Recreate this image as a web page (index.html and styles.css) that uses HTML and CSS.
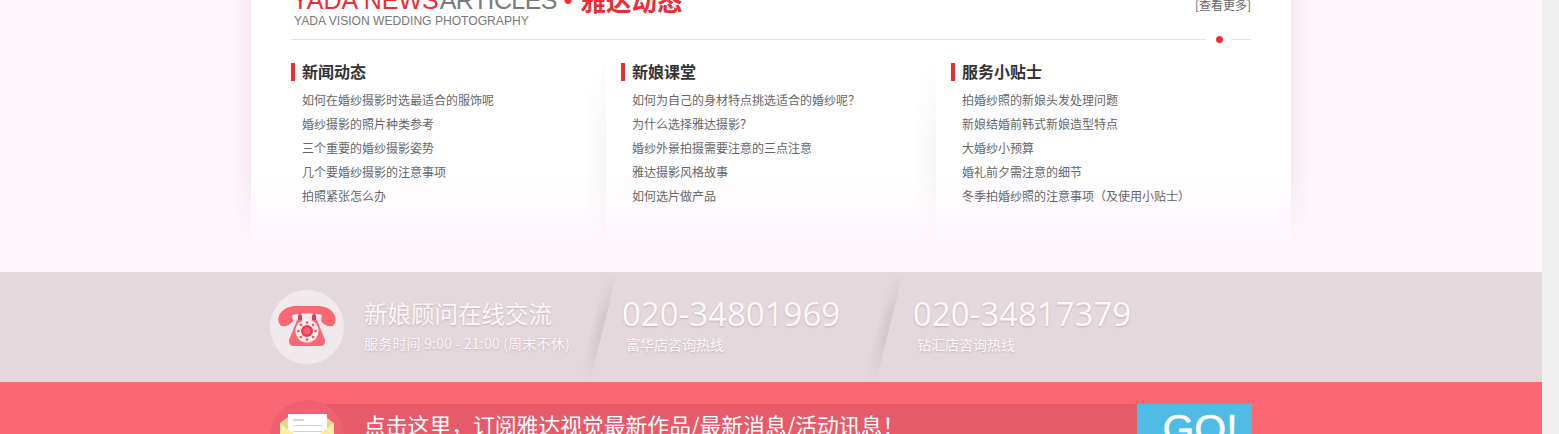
FILE: index.html
```html
<!DOCTYPE html>
<html lang="zh-CN">
<head>
<meta charset="utf-8">
<title>雅达动态</title>
<link rel="stylesheet" href="styles.css">
</head>
<body>
<div class="page">
  <section class="news">
    <div class="panel">
      <span class="shade shade-left"></span>
      <span class="shade shade-right"></span>
      <header class="head">
        <div class="head-text">
          <h2 class="head-title"><span class="en-red">YADA NEWS</span><span class="en-grey">ARTICLES</span><span class="head-dot">•</span><span class="cn-red">雅达动态</span></h2>
          <p class="head-sub">YADA VISION WEDDING PHOTOGRAPHY</p>
        </div>
        <a class="more">[查看更多]</a>
      </header>
      <div class="rule"><span class="rule-line"></span><span class="rule-dot"></span><span class="rule-end"></span></div>
      <div class="cols">
        <div class="col col-first">
          <h3 class="col-title">新闻动态</h3>
          <ul class="list">
            <li>如何在婚纱摄影时选最适合的服饰呢</li>
            <li>婚纱摄影的照片种类参考</li>
            <li>三个重要的婚纱摄影姿势</li>
            <li>几个要婚纱摄影的注意事项</li>
            <li>拍照紧张怎么办</li>
          </ul>
        </div>
        <div class="col col-mid">
          <h3 class="col-title">新娘课堂</h3>
          <ul class="list">
            <li>如何为自己的身材特点挑选适合的婚纱呢？</li>
            <li>为什么选择雅达摄影？</li>
            <li>婚纱外景拍摄需要注意的三点注意</li>
            <li>雅达摄影风格故事</li>
            <li>如何选片做产品</li>
          </ul>
        </div>
        <div class="col col-last">
          <h3 class="col-title">服务小贴士</h3>
          <ul class="list">
            <li>拍婚纱照的新娘头发处理问题</li>
            <li>新娘结婚前韩式新娘造型特点</li>
            <li>大婚纱小预算</li>
            <li>婚礼前夕需注意的细节</li>
            <li>冬季拍婚纱照的注意事项（及使用小贴士）</li>
          </ul>
        </div>
      </div>
    </div>
  </section>

  <section class="contact">
    <div class="contact-in">
      <div class="badge badge-light">
        <svg class="badge-svg" viewBox="0 0 74 74" width="74" height="74" aria-hidden="true">
          <path fill="#fb6874" d="M9 33C6 25 14 16 26 16H48C60 16 68 25 65 33L63 36C58 37 54 35 51 31L52 25C44 23 30 23 22 25L23 31C20 35 16 37 11 36Z"/>
          <rect x="28" y="24" width="4" height="8" rx="2" fill="#d9404f"/>
          <rect x="42" y="24" width="4" height="8" rx="2" fill="#d9404f"/>
          <path fill="#fb6874" d="M27 30H47L55 50Q55.500 56 50 56H24Q18.500 56 19 50Z"/>
          <circle cx="37" cy="41" r="11.500" fill="#f8eef0"/>
          <circle cx="37" cy="41" r="6" fill="#e8404f"/>
          <circle cx="37" cy="41" r="3.500" fill="#f9626f"/>
          <g fill="#f2545f">
            <circle cx="37" cy="32.500" r="1.300"/><circle cx="43" cy="35" r="1.300"/><circle cx="45.500" cy="41" r="1.300"/><circle cx="43" cy="47" r="1.300"/><circle cx="37" cy="49.500" r="1.300"/><circle cx="31" cy="47" r="1.300"/><circle cx="28.500" cy="41" r="1.300"/><circle cx="31" cy="35" r="1.300"/>
          </g>
        </svg>
      </div>
      <div class="advisor">
        <p class="advisor-title">新娘顾问在线交流</p>
        <p class="advisor-sub">服务时间 9:00 - 21:00 (周末不休)</p>
      </div>
      <span class="slash slash-one"></span>
      <div class="hotline hotline-one">
        <p class="tel">020-34801969</p>
        <p class="tel-sub">富华店咨询热线</p>
      </div>
      <span class="slash slash-two"></span>
      <div class="hotline">
        <p class="tel">020-34817379</p>
        <p class="tel-sub">钻汇店咨询热线</p>
      </div>
    </div>
  </section>

  <section class="subscribe">
    <div class="sub-in">
      <div class="badge badge-red">
        <svg class="badge-svg" viewBox="0 0 74 74" width="74" height="74" aria-hidden="true">
          <path fill="#e8d787" d="M10 23L18 17H56L64 23V50H10Z"/>
          <rect x="18" y="14" width="39" height="36" fill="#fff"/>
          <rect x="23" y="19" width="11" height="2" fill="#d4d4d4"/>
          <rect x="23" y="25" width="29" height="1" fill="#d4d4d4"/>
          <rect x="23" y="31" width="29" height="1" fill="#d4d4d4"/>
          <path fill="#fbeea5" d="M10 23L37 44L64 23V50H10Z"/>
        </svg>
      </div>
      <div class="sub-bar">
        <p class="sub-text">点击这里，订阅雅达视觉最新作品/最新消息/活动讯息！</p>
        <a class="go">GO!</a>
      </div>
    </div>
  </section>
</div>
<div class="track"></div>
</body>
</html>
```
FILE: styles.css
```css
* { box-sizing: border-box; }
html, body { margin: 0; padding: 0; height: 434px; overflow: hidden; }
body {
  display: flex;
  font-family: "Noto Sans CJK SC", "Liberation Sans", sans-serif;
  background: #f0f0f0;
}
p, h2, h3, ul { margin: 0; padding: 0; }
.page { width: 1542px; flex: none; display: flex; flex-direction: column; }
.track { flex: 1; background: #f0f0f0; }

.news { height: 272px; background: #fef6fc; flex: none; }
.panel {
  position: relative;
  width: 1040px;
  height: 240px;
  margin: 0 auto;
  padding: 0 40px;
  background: linear-gradient(180deg, #fff 0, #fff 170px, #fef6fc 240px);
}
.shade {
  position: absolute;
  top: 0;
  height: 245px;
  width: 20px;
  -webkit-mask-image: linear-gradient(180deg, #000 0, #000 170px, transparent 100%);
  mask-image: linear-gradient(180deg, #000 0, #000 170px, transparent 100%);
}
.shade-left { left: -20px; background: linear-gradient(270deg, rgba(130, 80, 120, .07), rgba(130, 80, 120, 0)); }
.shade-right { right: -20px; background: linear-gradient(90deg, rgba(130, 80, 120, .07), rgba(130, 80, 120, 0)); }

.head { display: flex; justify-content: space-between; align-items: flex-start; height: 39px; }
.head-text { padding-left: 1px; }
.head-title {
  margin-top: -14px;
  height: 28px;
  line-height: 28px;
  white-space: nowrap;
  font-family: "Liberation Sans", sans-serif;
  font-size: 25px;
  font-weight: 400;
  display: flex;
  align-items: center;
}
.en-red { color: #ee2c34; }
.en-grey { color: #7a7a7a; margin-left: 1px; letter-spacing: -.6px; }
.head-dot { color: #ee2c34; margin: 0 8px 0 7px; font-weight: 700; }
.cn-red {
  color: #ee2c34;
  font-family: "Noto Sans CJK SC", sans-serif;
  font-size: 25.500px;
  font-weight: 700;
}
.head-sub {
  padding-left: 2px;
  font-family: "Liberation Sans", sans-serif;
  font-size: 12.100px;
  line-height: 14px;
  color: #777;
  white-space: nowrap;
}
.more {
  margin-top: -3px;
  font-size: 12px;
  line-height: 16px;
  color: #666;
  white-space: nowrap;
}

.rule { display: flex; align-items: center; height: 1px; }
.rule-line { flex: 1; height: 1px; background: #e5e5e5; }
.rule-dot { width: 7px; height: 7px; margin: 0 9px 0 10px; border-radius: 50%; background: #ea2f38; }
.rule-end { width: 19px; height: 1px; background: #e5e5e5; }

.cols { display: flex; margin-top: 23px; }
.col { position: relative; width: 330px; flex: none; }
.col-first::after,
.col-mid::after {
  content: "";
  position: absolute;
  top: -14px;
  left: 291px;
  width: 24px;
  height: 195px;
  background: linear-gradient(90deg, rgba(110, 90, 110, 0), rgba(110, 90, 110, .055));
  -webkit-mask-image: linear-gradient(180deg, transparent 0, #000 45%, #000 65%, transparent 100%);
  mask-image: linear-gradient(180deg, transparent 0, #000 45%, #000 65%, transparent 100%);
}
.col-title {
  height: 18px;
  padding-left: 7px;
  border-left: 4px solid #ee2c34;
  font-size: 16px;
  font-weight: 700;
  line-height: 16px;
  color: #333;
}
.list { list-style: none; margin-top: 7px; padding-left: 11px; }
.list li {
  height: 24px;
  line-height: 24px;
  font-size: 12px;
  color: #666;
  white-space: nowrap;
}

.contact { height: 110px; background: #e3d8dc; flex: none; }
.contact-in {
  display: flex;
  align-items: flex-start;
  width: 1040px;
  height: 110px;
  margin: 0 auto;
  padding: 18px 0 0 19px;
  position: relative;
}
.badge { width: 74px; height: 74px; flex: none; border-radius: 50%; }
.badge-light { background: #f0eaed; }
.badge-svg { display: block; }
.advisor { margin-left: 20px; width: 258px; color: #faf7f8; text-shadow: 0 1px 2px rgba(150, 120, 130, .4); }
.advisor-title { margin-top: 6px; font-size: 23.500px; font-weight: 400; line-height: 34px; white-space: nowrap; }
.advisor-sub { margin-top: 1px; font-size: 14px; font-weight: 400; letter-spacing: .2px; line-height: 24px; white-space: nowrap; }
.slash {
  position: absolute;
  top: 0;
  width: 40px;
  height: 110px;
  background: linear-gradient(103.800deg, rgba(120, 100, 105, 0) 40%, rgba(120, 100, 105, .15) 59.700%, rgba(120, 100, 105, 0) 59.700%);
  -webkit-mask-image: linear-gradient(180deg, transparent 0, #000 40%, #000 60%, transparent 100%);
  mask-image: linear-gradient(180deg, transparent 0, #000 40%, #000 60%, transparent 100%);
}
.slash-one { left: 326px; }
.slash-two { left: 612px; }
.hotline { color: #fbf8f9; text-shadow: 0 1px 2px rgba(150, 120, 130, .4); }
.hotline-one { width: 291px; }
.tel { font-family: "Open Sans", sans-serif; font-size: 33px; font-weight: 400; line-height: 48px; white-space: nowrap; }
.tel-sub { margin-top: -4px; padding-left: 4px; font-size: 14px; font-weight: 400; line-height: 20px; white-space: nowrap; }

.subscribe { height: 52px; background: #fb6874; flex: none; overflow: hidden; }
.sub-in {
  position: relative;
  width: 1040px;
  margin: 0 auto;
  padding: 22px 39px 0 56px;
}
.badge-red { position: absolute; left: 19px; top: 18px; background: #f06070; }
.sub-bar {
  display: flex;
  justify-content: space-between;
  height: 60px;
  background: #e75a6a;
}
.sub-text {
  padding-left: 57px;
  font-size: 21.800px;
  line-height: 42px;
  color: #fff;
  white-space: nowrap;
}
.go {
  width: 115px;
  flex: none;
  padding-left: 11px;
  background: #4fbce6;
  color: #fff;
  font-family: "Liberation Sans", sans-serif;
  font-size: 41px;
  line-height: 51px;
  text-align: center;
  -webkit-text-stroke: .5px #fff;
}
```
